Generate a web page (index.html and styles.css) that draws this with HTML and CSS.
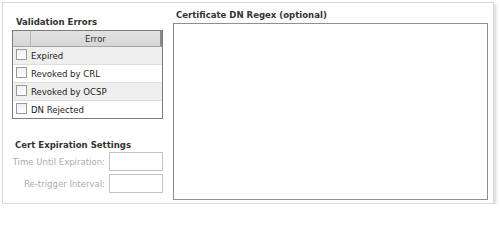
FILE: index.html
```html
<!DOCTYPE html>
<html>
<head>
<meta charset="utf-8">
<link rel="stylesheet" href="styles.css">
</head>
<body>
<div class="panel">
  <div class="left-col">
    <div class="heading heading-validation">Validation Errors</div>
    <div class="grid">
      <div class="grid-head">
        <div class="head-check"></div>
        <div class="head-label">Error</div>
      </div>
      <div class="grid-row alt"><span class="check"></span><span class="row-label">Expired</span></div>
      <div class="grid-row"><span class="check"></span><span class="row-label">Revoked by CRL</span></div>
      <div class="grid-row alt"><span class="check"></span><span class="row-label">Revoked by OCSP</span></div>
      <div class="grid-row last"><span class="check"></span><span class="row-label">DN Rejected</span></div>
    </div>
    <div class="heading heading-expiration">Cert Expiration Settings</div>
    <div class="form-row">
      <label class="field-label">Time Until Expiration:</label>
      <span class="field-input"></span>
    </div>
    <div class="form-row">
      <label class="field-label">Re-trigger Interval:</label>
      <span class="field-input"></span>
    </div>
  </div>
  <div class="right-col">
    <div class="heading heading-regex">Certificate DN Regex (optional)</div>
    <div class="regex-area"></div>
  </div>
</div>
</body>
</html>
```

FILE: styles.css
```css
html, body {
  margin: 0;
  padding: 0;
  background: #ffffff;
}

body {
  font-family: "DejaVu Sans Condensed", "DejaVu Sans", "Liberation Sans", sans-serif;
  font-stretch: condensed;
  font-size: 9.5px;
  color: #222222;
}

.panel {
  box-sizing: border-box;
  margin: 2px 0 0 2px;
  width: 492px;
  height: 202px;
  border: 1px solid #d9d9d9;
  box-shadow: 2px 2px 3px rgba(0, 0, 0, 0.16);
  padding: 0 5px 0 9px;
  display: flex;
  gap: 10px;
  background: #ffffff;
}

.left-col {
  width: 151px;
  padding-top: 13px;
  display: flex;
  flex-direction: column;
}

.right-col {
  flex: 1;
  padding-top: 6px;
  display: flex;
  flex-direction: column;
}

.heading {
  font-weight: bold;
  color: #333333;
  line-height: 12px;
  height: 12px;
  white-space: nowrap;
}

.heading-validation {
  padding-left: 4px;
  margin-bottom: 2px;
}

.heading-expiration {
  padding-left: 3px;
  margin-top: 20px;
  margin-bottom: 1px;
}

.heading-regex {
  padding-left: 3px;
  margin-bottom: 2px;
}

.grid {
  border: 1px solid #7c7c7c;
  display: flex;
  flex-direction: column;
}

.grid-head {
  display: flex;
  height: 15px;
  border-bottom: 1px solid #a8a8a8;
  background: linear-gradient(#e2e2e2, #d6d6d6);
}

.head-check {
  width: 17px;
  border-right: 1px solid #b8b8b8;
}

.head-label {
  flex: 1;
  text-align: center;
  line-height: 15px;
  color: #333333;
  border-right: 2px solid #8a8a8a;
}

.grid-row {
  display: flex;
  align-items: center;
  height: 17px;
  border-bottom: 1px solid #dddddd;
  background: #ffffff;
}

.grid-row.alt {
  background: #efefef;
}

.grid-row.last {
  border-bottom: none;
}

.check {
  box-sizing: border-box;
  width: 11px;
  height: 11px;
  margin: -2px 4px 0 3px;
  border: 1px solid #9a9a9a;
  background: linear-gradient(#f0f0f0, #ffffff);
}

.row-label {
  color: #222222;
  white-space: nowrap;
}

.form-row {
  display: flex;
  justify-content: flex-end;
  align-items: center;
  gap: 4px;
  height: 19px;
  margin-bottom: 3px;
}

.field-label {
  color: #acacac;
  white-space: nowrap;
}

.field-input {
  box-sizing: border-box;
  width: 54px;
  height: 19px;
  border: 1px solid #c4c4c4;
  background: #ffffff;
}

.regex-area {
  box-sizing: border-box;
  width: 315px;
  height: 177px;
  border: 1px solid #8e8e8e;
  background: #ffffff;
}
```
